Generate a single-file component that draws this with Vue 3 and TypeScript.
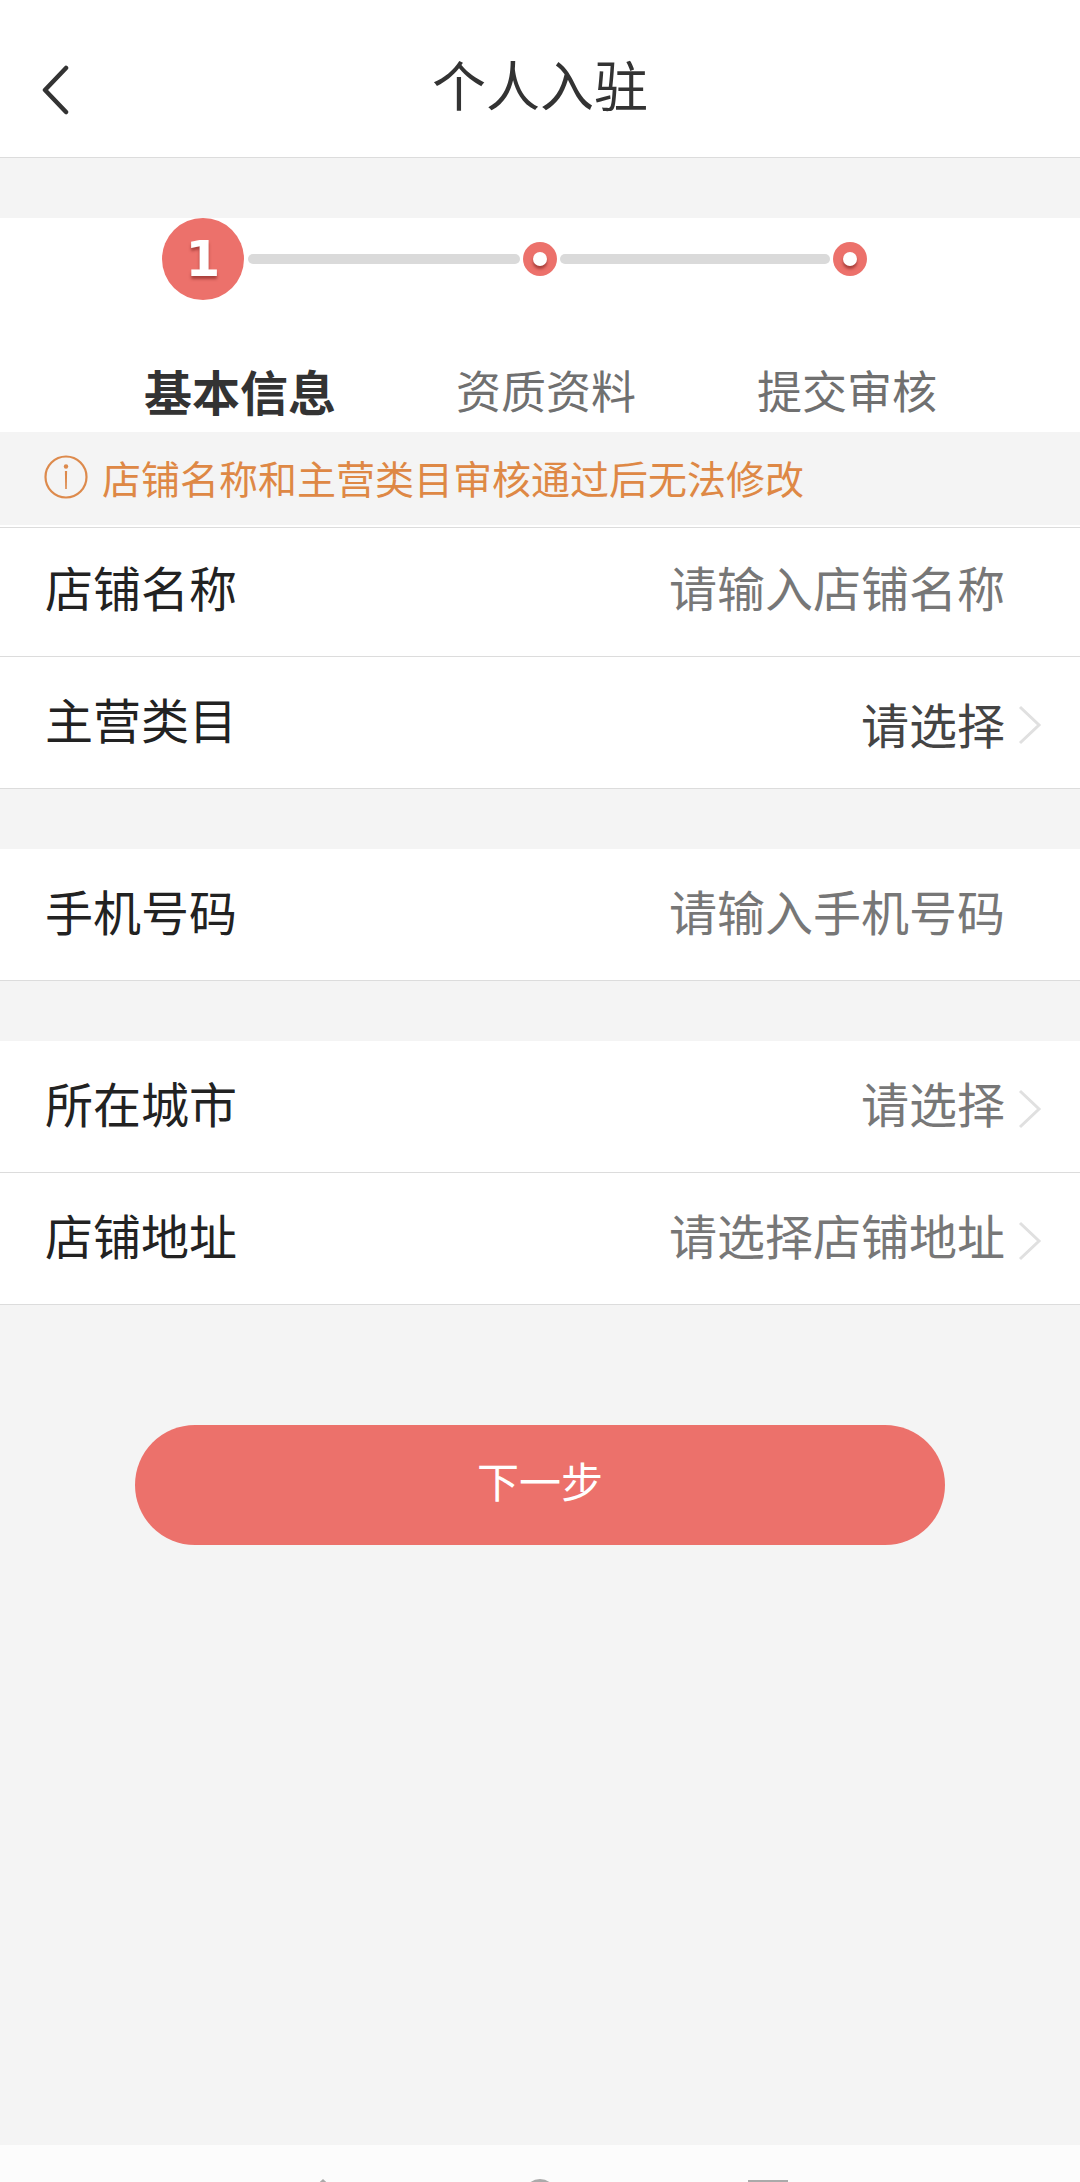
<script setup lang="ts">
interface FormRow {
  label: string;
  value: string;
  arrow: boolean;
  strong?: boolean;
}

const tabs = ["基本信息", "资质资料", "提交审核"];

const groups: FormRow[][] = [
  [
    { label: "店铺名称", value: "请输入店铺名称", arrow: false },
    { label: "主营类目", value: "请选择", arrow: true, strong: true },
  ],
  [{ label: "手机号码", value: "请输入手机号码", arrow: false }],
  [
    { label: "所在城市", value: "请选择", arrow: true },
    { label: "店铺地址", value: "请选择店铺地址", arrow: true },
  ],
];
</script>

<template>
  <div class="page">
    <header class="nav">
      <svg class="nav__back" width="28" height="50" viewBox="0 0 28 50">
        <path d="M25 3 L4 25 L25 47" fill="none" stroke="#333" stroke-width="4.5" stroke-linecap="round" stroke-linejoin="round" />
      </svg>
      <h1 class="nav__title">个人入驻</h1>
    </header>

    <section class="steps">
      <div class="steps__track">
        <span class="step-num">1</span>
        <span class="step-line" />
        <span class="step-dot"><i /></span>
        <span class="step-line" />
        <span class="step-dot"><i /></span>
      </div>
      <div class="steps__tabs">
        <span
          v-for="(tab, i) in tabs"
          :key="tab"
          class="steps__tab"
          :class="{ 'steps__tab--active': i === 0 }"
        >{{ tab }}</span>
      </div>
    </section>

    <div class="notice">
      <svg width="44" height="44" viewBox="0 0 44 44">
        <circle cx="22" cy="22" r="20.5" fill="none" stroke="#dd8a4c" stroke-width="2.2" />
        <circle cx="22" cy="11.5" r="2.2" fill="#dd8a4c" />
        <path d="M20.9 16 H23.1 L22.8 34 H21.2 Z" fill="#dd8a4c" />
      </svg>
      <span>店铺名称和主营类目审核通过后无法修改</span>
    </div>

    <div
      v-for="(group, g) in groups"
      :key="g"
      class="group"
      :class="{ 'group--first': g === 0 }"
    >
      <div v-for="row in group" :key="row.label" class="row">
        <span class="row__label">{{ row.label }}</span>
        <span class="row__value" :class="{ 'row__value--strong': row.strong }">{{ row.value }}</span>
        <span class="row__arrow">
          <svg v-if="row.arrow" width="24" height="40" viewBox="0 0 24 40">
            <path d="M2 2 L21 20 L2 38" fill="none" stroke="#e0e0e0" stroke-width="3" />
          </svg>
        </span>
      </div>
    </div>

    <button class="next" type="button">下一步</button>

    <div class="spacer" />

    <footer class="sysbar">
      <svg width="40" height="37" viewBox="0 0 40 37">
        <path d="M20 34 L8 45 L20 56 L32 45 Z" fill="#aaa" />
      </svg>
      <svg width="40" height="37" viewBox="0 0 40 37">
        <circle cx="20" cy="50" r="16" fill="#aaa" />
      </svg>
      <svg width="40" height="37" viewBox="0 0 40 37">
        <rect x="0" y="35" width="40" height="10" fill="#aaa" />
      </svg>
    </footer>
  </div>
</template>

<style>
html,
body {
  margin: 0;
  background: #f4f4f4;
}
</style>

<style scoped>
.page {
  position: relative;
  display: flex;
  flex-direction: column;
  width: 1080px;
  height: 2182px;
  overflow: hidden;
  background: #f4f4f4;
  font-family: "Noto Sans CJK SC", "Noto Sans", sans-serif;
}

.nav {
  position: relative;
  display: flex;
  align-items: center;
  justify-content: center;
  height: 158px;
  flex: none;
  box-sizing: border-box;
  background: #fff;
  border-bottom: 1px solid #dcdcdc;
}

.nav__back {
  position: absolute;
  left: 41px;
  top: 65px;
}

.nav__title {
  margin: 10px 0 0;
  font-size: 54px;
  font-weight: 400;
  line-height: 70px;
  color: #333;
}

.steps {
  flex: none;
  margin-top: 60px;
  height: 214px;
  background: #fff;
}

.steps__track {
  display: flex;
  align-items: center;
  height: 82px;
  padding-left: 162px;
}

.step-num {
  display: flex;
  align-items: center;
  justify-content: center;
  width: 82px;
  height: 82px;
  border-radius: 50%;
  background: #ec716b;
  color: #fff;
  font-family: "DejaVu Sans", sans-serif;
  font-size: 50px;
  font-weight: 700;
  line-height: 1;
  text-shadow: 0 3px 3px #a8403c;
}

.step-line {
  width: 272px;
  height: 10px;
  margin: 0 3px 0 4px;
  border-radius: 5px;
  background: #dadada;
}

.step-dot + .step-line {
  width: 270px;
  margin-left: 3px;
}

.step-dot {
  display: flex;
  align-items: center;
  justify-content: center;
  width: 34px;
  height: 34px;
  border-radius: 50%;
  background: #ec716b;
}

.step-dot i {
  display: block;
  width: 14px;
  height: 14px;
  border-radius: 50%;
  background: #fff;
  box-shadow: 0 3px 3px #a8403c;
}

.steps__tabs {
  display: flex;
  align-items: center;
  margin-top: 59px;
  padding-left: 144px;
  height: 62px;
}

.steps__tab {
  margin-right: 121px;
  font-size: 45px;
  line-height: 62px;
  color: #707070;
  white-space: nowrap;
}

.steps__tab--active {
  margin-right: 120px;
  font-size: 48px;
  font-weight: 700;
  color: #333;
}

.notice {
  display: flex;
  flex: none;
  align-items: center;
  gap: 14px;
  height: 93px;
  box-sizing: border-box;
  padding: 0 0 3px 44px;
  font-size: 39px;
  color: #de8845;
}

.group {
  flex: none;
  margin-top: 60px;
  background: #fff;
}

.group--first {
  margin-top: 0;
  padding-top: 2px;
}

.group--first .row:first-child {
  height: 130px;
  padding-bottom: 3px;
  border-top: 1px solid #dcdcdc;
}

.row {
  display: flex;
  align-items: center;
  height: 132px;
  box-sizing: border-box;
  padding-left: 45px;
  border-bottom: 1px solid #dcdcdc;
}

.row__label {
  flex: 1;
  margin-bottom: 10px;
  font-size: 48px;
  color: #222;
}

.row__value {
  margin-bottom: 10px;
  font-size: 48px;
  color: #777;
}

.row__value--strong {
  margin-bottom: 0;
  color: #444;
}

.row__arrow {
  display: flex;
  align-items: center;
  width: 75px;
  height: 40px;
  padding: 4px 0 0 13px;
  box-sizing: border-box;
}

.next {
  flex: none;
  align-self: center;
  width: 810px;
  height: 120px;
  margin-top: 120px;
  padding: 0 0 12px;
  border: none;
  border-radius: 60px;
  background: #ec716b;
  color: #fff;
  font-family: inherit;
  font-size: 42px;
}

.spacer {
  flex: 1;
}

.sysbar {
  flex: none;
  height: 37px;
  background: #fcfcfc;
}

.sysbar svg {
  position: absolute;
  top: 2145px;
}

.sysbar svg:nth-child(1) {
  left: 303px;
}

.sysbar svg:nth-child(2) {
  left: 520px;
}

.sysbar svg:nth-child(3) {
  left: 748px;
}
</style>
